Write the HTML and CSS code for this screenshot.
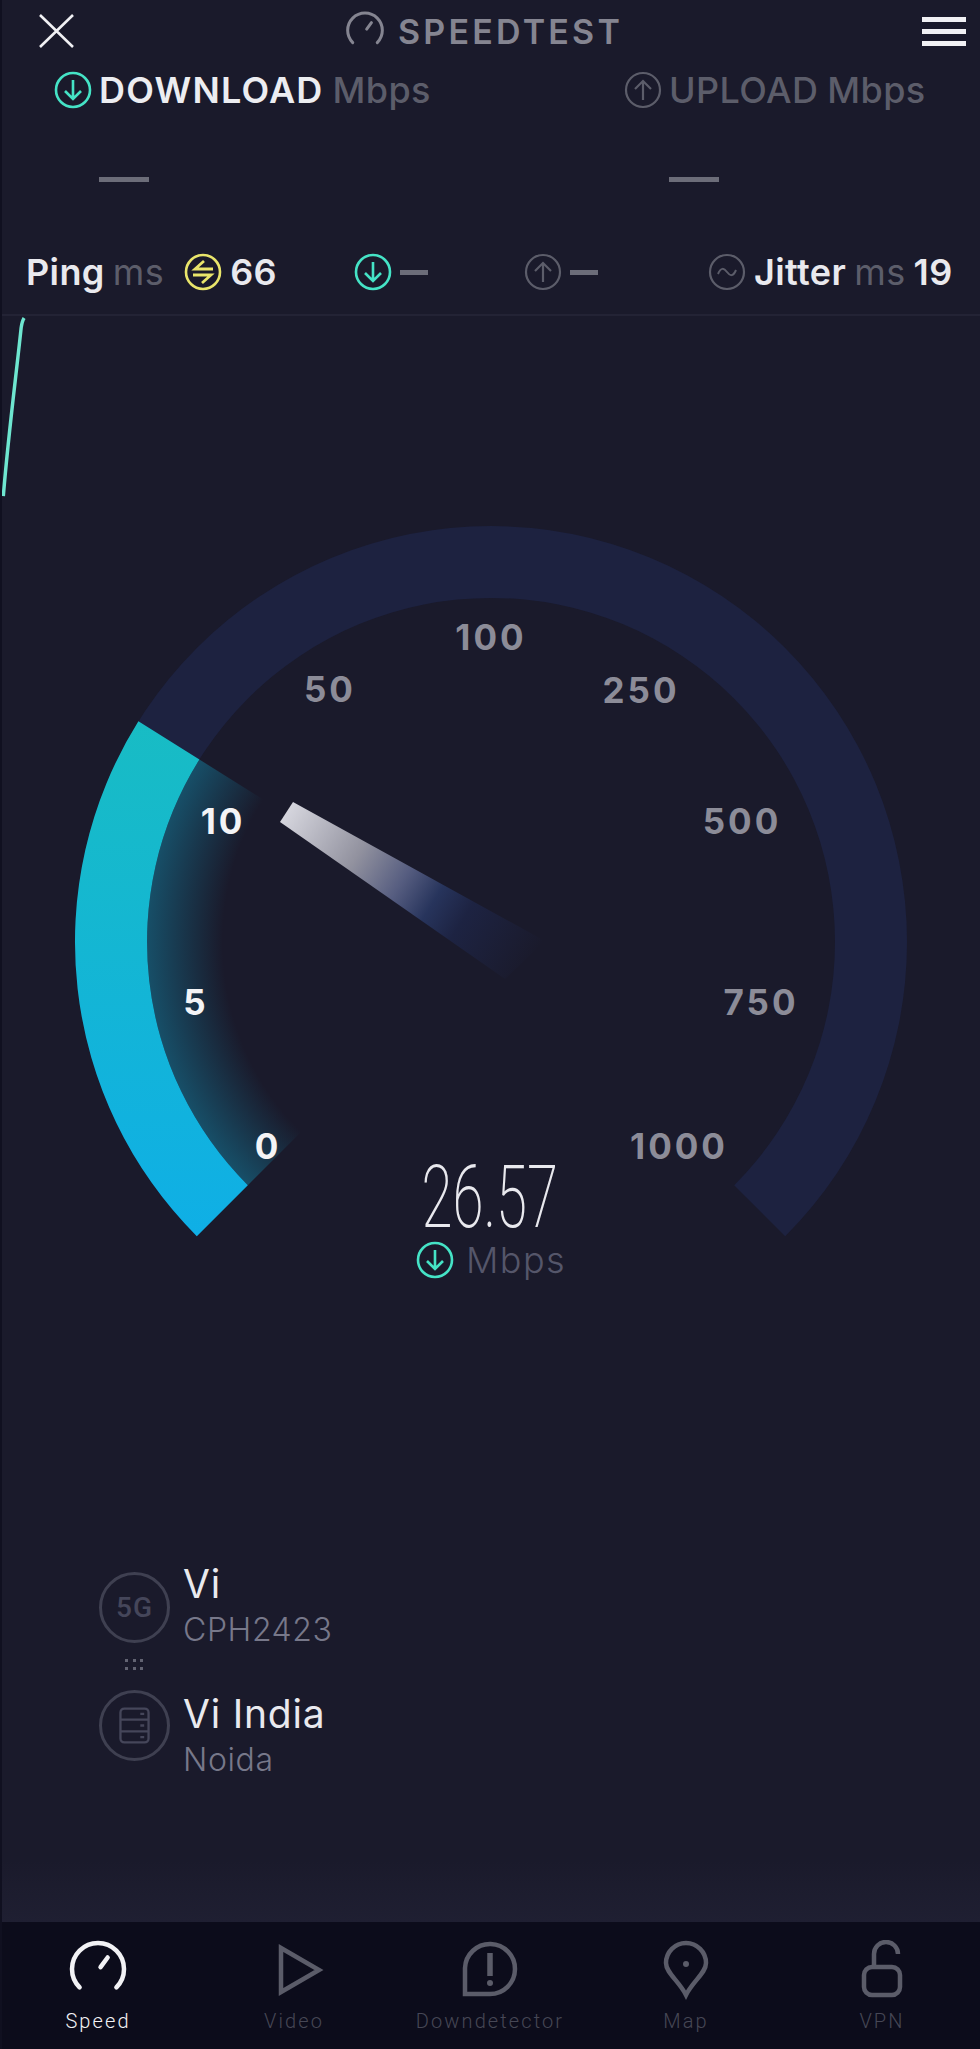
FILE: index.html
```html
<!DOCTYPE html>
<html lang="en">
<head>
    <meta charset="UTF-8">
    <meta name="viewport" content="width=device-width, initial-scale=1.0">
    <title>Speedtest</title>
    <link rel="stylesheet" href="styles.css">
</head>
<body>
    <svg class="defs" width="0" height="0">
        <symbol id="i-down" viewBox="0 0 38 38">
            <circle cx="19" cy="19" r="17" fill="none" stroke="currentColor" stroke-width="2.6"/>
            <path d="M19 9V28M11 20L19 28L27 20" fill="none" stroke="currentColor" stroke-width="2.6"/>
        </symbol>
        <symbol id="i-up" viewBox="0 0 38 38">
            <circle cx="19" cy="19" r="17" fill="none" stroke="currentColor" stroke-width="2.2"/>
            <path d="M19 29V10M11 18L19 10L27 18" fill="none" stroke="currentColor" stroke-width="2.2"/>
        </symbol>
        <symbol id="i-ping" viewBox="0 0 38 38">
            <circle cx="19" cy="19" r="17" fill="none" stroke="currentColor" stroke-width="2.6"/>
            <path d="M29 16H11L20 8M9 22H27L18 30" fill="none" stroke="currentColor" stroke-width="2.8"/>
        </symbol>
        <symbol id="i-jitter" viewBox="0 0 38 38">
            <circle cx="19" cy="19" r="17" fill="none" stroke="currentColor" stroke-width="2.2"/>
            <path d="M10 21C13 14 16 15 19 19C22 23 25 24 28 17" fill="none" stroke="currentColor" stroke-width="2"/>
        </symbol>
        <symbol id="i-gauge" viewBox="0 0 60 60">
            <path d="M11.6 47.4A26 26 0 1 1 48.4 47.4" fill="none" stroke="currentColor" stroke-width="4.5" stroke-linecap="round"/>
            <path d="M29 32L40 17" fill="none" stroke="currentColor" stroke-width="4.5" stroke-linecap="round" stroke-dasharray="12 30" stroke-dashoffset="-6"/>
        </symbol>
    </svg>

    <div class="app">
        <header class="topbar">
            <svg class="close" viewBox="0 0 35 34"><path d="M1 1L34 33M34 1L1 33"/></svg>
            <div class="brand">
                <svg class="brand-icon"><use href="#i-gauge"/></svg>
                <span>SPEEDTEST</span>
            </div>
            <div class="menu"><i></i><i></i><i></i></div>
        </header>

        <section class="results">
            <div class="result">
                <div class="result-head">
                    <svg class="icon teal"><use href="#i-down"/></svg>
                    <b>DOWNLOAD</b><span>Mbps</span>
                </div>
                <div class="result-dash"></div>
            </div>
            <div class="result">
                <div class="result-head">
                    <svg class="icon dim"><use href="#i-up"/></svg>
                    <span>UPLOAD</span><span>Mbps</span>
                </div>
                <div class="result-dash"></div>
            </div>
        </section>

        <section class="metrics">
            <div class="metric">
                <b>Ping</b><span class="unit">ms</span>
                <svg class="icon yellow ping-icon"><use href="#i-ping"/></svg>
                <b>66</b>
            </div>
            <div class="metric">
                <svg class="icon teal"><use href="#i-down"/></svg>
                <i class="small-dash"></i>
            </div>
            <div class="metric">
                <svg class="icon dim"><use href="#i-up"/></svg>
                <i class="small-dash"></i>
            </div>
            <div class="metric">
                <svg class="icon dim"><use href="#i-jitter"/></svg>
                <b>Jitter</b><span class="unit">ms</span><b>19</b>
            </div>
        </section>

        <!-- live throughput trace, only just started -->
        <svg class="graph" viewBox="0 0 980 185">
            <path d="M-3 182C2 120 10 60 15 12Q16 5 18 2"/>
        </svg>

        <section class="gauge">
            <svg class="dial" viewBox="0 500 980 760">
                <defs>
                    <linearGradient id="fill" x1="0" y1="722" x2="0" y2="1237" gradientUnits="userSpaceOnUse">
                        <stop offset="0" stop-color="#18bcc4"/>
                        <stop offset="1" stop-color="#0fafe6"/>
                    </linearGradient>
                    <radialGradient id="glow" cx="491" cy="943" r="344" gradientUnits="userSpaceOnUse">
                        <stop offset="0.78" stop-color="#1a1a2b"/>
                        <stop offset="1" stop-color="#174f68"/>
                    </radialGradient>
                    <linearGradient id="needle" x1="286" y1="813" x2="530" y2="965" gradientUnits="userSpaceOnUse">
                        <stop offset="0" stop-color="#d6d6de"/>
                        <stop offset="0.29" stop-color="#92929f"/>
                        <stop offset="0.47" stop-color="#565d80"/>
                        <stop offset="0.6" stop-color="#27345c"/>
                        <stop offset="0.72" stop-color="#1d2342"/>
                        <stop offset="1" stop-color="#1a1a2b"/>
                    </linearGradient>
                </defs>
                <path class="track" d="M196.8 1237.2A416 416 0 1 1 785.2 1237.2L734.2 1186.2A344 344 0 1 0 247.8 1186.2Z"/>
                <path d="M491 943L199.4 760.5A344 344 0 0 0 247.8 1186.2Z" fill="url(#glow)"/>
                <path d="M196.8 1237.2A416 416 0 0 1 138.4 722.3L199.4 760.5A344 344 0 0 0 247.8 1186.2Z" fill="url(#fill)"/>
                <path d="M293 803L280 823L505 980L545 942Z" fill="url(#needle)"/>

                <text class="tick on" x="268" y="1160">0</text>
                <text class="tick on" x="196" y="1016">5</text>
                <text class="tick on" x="223" y="835">10</text>
                <text class="tick" x="330" y="703">50</text>
                <text class="tick" x="491" y="651">100</text>
                <text class="tick" x="641" y="704">250</text>
                <text class="tick" x="742" y="835">500</text>
                <text class="tick" x="761" y="1016">750</text>
                <text class="tick" x="679" y="1160">1000</text>
            </svg>
            <div class="reading">
                <div class="reading-value">26.57</div>
                <div class="reading-unit">
                    <svg class="icon teal"><use href="#i-down"/></svg>
                    <span>Mbps</span>
                </div>
            </div>
        </section>

        <section class="servers">
            <div class="server">
                <div class="server-badge"><span class="badge-5g">5G</span></div>
                <div class="server-text first">
                    <div class="server-name">Vi</div>
                    <div class="server-sub">CPH2423</div>
                </div>
            </div>
            <div class="link-dots"><i></i><i></i><i></i><i></i><i></i><i></i></div>
            <div class="server">
                <div class="server-badge">
                    <svg class="rack" viewBox="0 0 32 38">
                        <rect x="1.5" y="1.5" width="29" height="35" rx="4"/>
                        <path d="M1.5 13H30.5M1.5 25H30.5M22 7H26M22 19H26M22 31H26"/>
                    </svg>
                </div>
                <div class="server-text">
                    <div class="server-name">Vi India</div>
                    <div class="server-sub">Noida</div>
                </div>
            </div>
        </section>

        <nav class="tabbar">
            <div class="tab active">
                <svg class="tab-icon"><use href="#i-gauge"/></svg>
                <span>Speed</span>
            </div>
            <div class="tab">
                <svg class="tab-icon" viewBox="0 0 60 60"><path d="M17 8L55 30L17 52Z"/></svg>
                <span>Video</span>
            </div>
            <div class="tab">
                <svg class="tab-icon" viewBox="0 0 60 60">
                    <path d="M5 54V28A25 25 0 1 1 30 54Z"/>
                    <path class="mark" d="M30 13V36"/>
                    <circle class="mark-dot" cx="30" cy="43" r="3"/>
                </svg>
                <span>Downdetector</span>
            </div>
            <div class="tab">
                <svg class="tab-icon" viewBox="0 0 60 60">
                    <path d="M30 55C23 41 10 33 10 23A20 20 0 0 1 50 23C50 33 37 41 30 55Z"/>
                    <circle class="mark-dot" cx="30" cy="24" r="3"/>
                </svg>
                <span>Map</span>
            </div>
            <div class="tab">
                <svg class="tab-icon" viewBox="0 0 60 60">
                    <rect x="12" y="27" width="36" height="28" rx="8"/>
                    <path d="M22 27V14A12 12 0 0 1 46 14"/>
                </svg>
                <span>VPN</span>
            </div>
        </nav>
    </div>
</body>
</html>
```

FILE: styles.css
```css
* {
    box-sizing: border-box;
}
body {
    margin: 0;
    background: #1a1a2b;
    color: #e9e9ee;
    font-family: Inter, "Open Sans", sans-serif;
}
.defs {
    position: absolute;
}
.app {
    width: 980px;
    height: 2049px;
    display: flex;
    flex-direction: column;
    overflow: hidden;
    border-left: 2px solid #101020;
    background: linear-gradient(#1a1a2b 1860px, #1f1f32 1922px);
}

/* top bar */
.topbar {
    height: 62px;
    display: flex;
    align-items: center;
    justify-content: space-between;
    padding: 0 14px 0 37px;
}
.close {
    width: 35px;
    height: 34px;
}
.close path {
    fill: none;
    stroke: #f1f1f4;
    stroke-width: 2.6;
}
.brand {
    display: flex;
    align-items: center;
    gap: 13px;
    margin-right: 28px;
    color: #858591;
    font-size: 34px;
    font-weight: 600;
    letter-spacing: 3.2px;
}
.brand-icon {
    width: 40px;
    height: 40px;
}
.menu {
    width: 44px;
    display: flex;
    flex-direction: column;
    gap: 7px;
}
.menu i {
    height: 5px;
    background: #f1f1f4;
}

/* download / upload */
.icon {
    width: 38px;
    height: 38px;
    flex: none;
}
.teal { color: #45e3c6; }
.dim { color: #5c5d6a; }
.yellow { color: #e9e56b; }

.results {
    display: grid;
    grid-template-columns: 570px 1fr;
    padding-left: 52px;
}
.result-head {
    height: 55px;
    display: flex;
    align-items: center;
    gap: 9px;
    font-size: 36px;
    font-weight: 500;
    letter-spacing: 0.4px;
    color: #5c5d6a;
}
.result-head b {
    font-weight: 600;
    letter-spacing: 1.2px;
    color: #ecedf1;
}
.result-head .icon {
    margin-right: -2px;
}
.result-dash {
    width: 50px;
    height: 5px;
    margin: 60px 0 0 45px;
    background: #6c6d79;
}

.metrics {
    display: grid;
    grid-template-columns: 328px 170px 184px 1fr;
    align-items: center;
    height: 58px;
    margin: 61px 0 13px;
    padding-left: 24px;
}
.metric {
    display: flex;
    align-items: center;
    gap: 8px;
    font-size: 36px;
    letter-spacing: 0.4px;
}
.metric b {
    font-weight: 600;
}
.unit {
    color: #5c5d6a;
}
.ping-icon {
    margin-left: 12px;
}
.small-dash {
    width: 28px;
    height: 5px;
    background: #6c6d79;
}

/* graph */
.graph {
    width: 978px;
    height: 185px;
    flex: none;
    border-top: 2px solid #232335;
}
.graph path {
    fill: none;
    stroke: #6ee6d0;
    stroke-width: 3.5;
}

/* dial */
.gauge {
    position: relative;
    height: 760px;
    flex: none;
}
.dial {
    display: block;
    width: 980px;
    height: 760px;
    margin-left: -2px;
}
.track {
    fill: #1d2240;
}
.tick {
    font-size: 35px;
    font-weight: 700;
    letter-spacing: 3px;
    text-anchor: middle;
    fill: #8c8c98;
}
.tick.on {
    fill: #f4f4f6;
}
.reading {
    position: absolute;
    top: 656px;
    left: -2px;
    width: 980px;
    display: flex;
    flex-direction: column;
    align-items: center;
}
.reading-value {
    font-family: Roboto, sans-serif;
    font-size: 88px;
    font-weight: 200;
    line-height: 84px;
    transform: scaleX(0.64);
}
.reading-unit {
    display: flex;
    align-items: center;
    gap: 12px;
    margin-top: -1px;
    padding-left: 2px;
    font-size: 36px;
    font-weight: 300;
    letter-spacing: 1.4px;
    color: #55566a;
}

/* device and server */
.servers {
    padding: 313px 0 0 97px;
}
.server {
    display: flex;
    gap: 13px;
}
.server-badge {
    width: 71px;
    height: 71px;
    flex: none;
    display: flex;
    align-items: center;
    justify-content: center;
    border: 3px solid #3f4051;
    border-radius: 50%;
}
.badge-5g {
    font-family: Roboto, sans-serif;
    font-size: 28px;
    font-weight: 500;
    letter-spacing: 1px;
    color: #45465a;
}
.rack {
    width: 31px;
    height: 37px;
}
.rack rect,
.rack path {
    fill: none;
    stroke: #45465a;
    stroke-width: 2.4;
}
.server-text {
    margin-top: 2px;
}
.server-text.first {
    margin-top: -10px;
}
.server-name {
    font-size: 39px;
    font-weight: 400;
    line-height: 44px;
    letter-spacing: 0.8px;
}
.server-sub {
    margin-top: 2px;
    font-size: 32px;
    font-weight: 300;
    line-height: 44px;
    letter-spacing: 0.6px;
    color: #77788a;
}
.link-dots {
    width: 18px;
    margin: 7px 0 20px 26px;
    display: grid;
    grid-template-columns: repeat(3, 3px);
    justify-content: space-between;
    row-gap: 5px;
}
.link-dots i {
    height: 3px;
    background: #626372;
}

/* bottom tabs */
.tabbar {
    margin-top: auto;
    margin-left: -2px;
    height: 127px;
    display: grid;
    grid-template-columns: repeat(5, 196px);
    background: #0c0c1b;
}
.tab {
    display: flex;
    flex-direction: column;
    align-items: center;
    padding-top: 18px;
    font-family: Roboto, sans-serif;
    font-size: 20px;
    font-weight: 300;
    letter-spacing: 2.1px;
    color: #464755;
}
.tab.active {
    color: #f2f2f5;
}
.tab-icon {
    width: 60px;
    height: 60px;
    margin-bottom: 9px;
}
.tab-icon path,
.tab-icon rect {
    fill: none;
    stroke: #5b5c69;
    stroke-width: 4.5;
}
.tab-icon .mark {
    stroke-width: 5.5;
}
.tab-icon .mark-dot {
    fill: #5b5c69;
}
```
